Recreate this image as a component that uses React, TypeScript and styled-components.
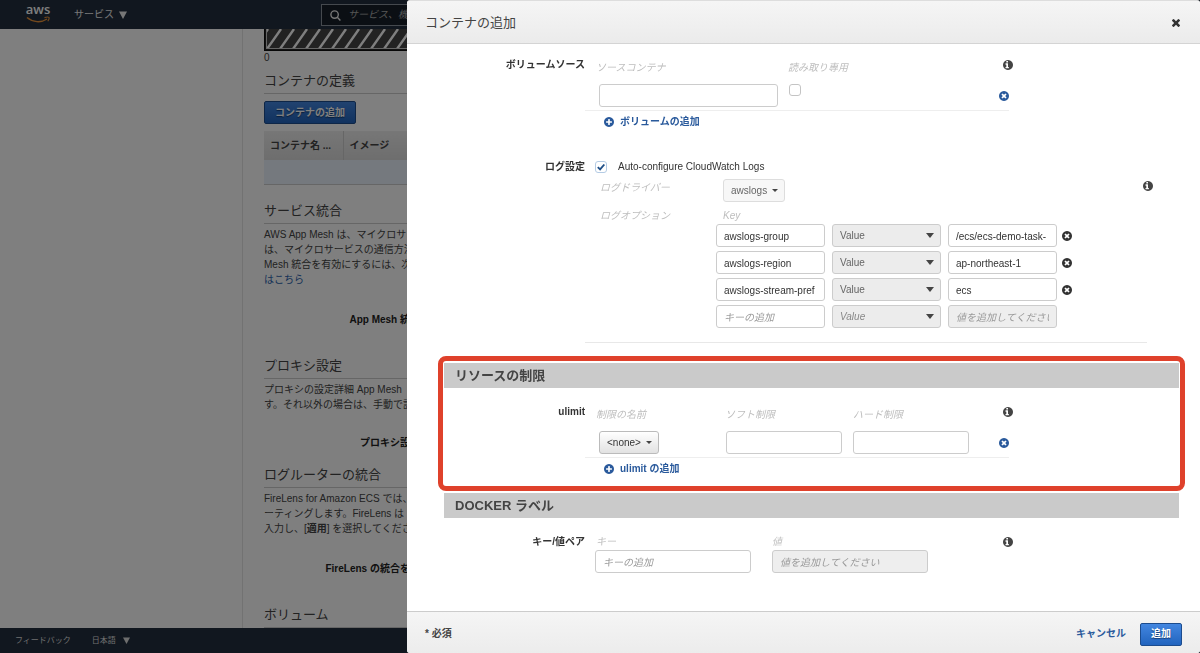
import React, { useState } from "react";
import styled, { createGlobalStyle, css } from "styled-components";

const GlobalStyle = createGlobalStyle`
  *, *::before, *::after { box-sizing: border-box; }
  body {
    margin: 0;
    color: #444;
    font-family: "Liberation Sans", "Noto Sans CJK JP", sans-serif;
    font-size: 10px;
    line-height: 14px;
  }
  button, input, select { font: inherit; color: inherit; margin: 0; }
  h1, h2, p { margin: 0; font-weight: normal; }
`;

/* ---------- Console page behind the dialog ---------- */

const Page = styled.div`
  display: flex;
  flex-direction: column;
  height: 100vh;
  overflow: hidden;
  background: #fff;
`;

const NavBar = styled.header`
  display: flex;
  align-items: center;
  flex: none;
  height: 29px;
  padding-left: 26px;
  background: #232f3e;
  color: #eee;
`;

const Logo = styled.a`
  display: flex;
  flex-direction: column;
  align-items: center;
  gap: 2px;
  width: 24px;
  padding-bottom: 3px;
  color: #fff;
  font-family: "Open Sans", sans-serif;
  font-size: 13px;
  font-weight: 600;
  line-height: 10px;
  text-decoration: none;
`;

const MenuButton = styled.button<{ $small?: boolean }>`
  display: flex;
  align-items: center;
  gap: ${(p) => (p.$small ? "7px" : "5px")};
  padding: 0;
  border: 0;
  background: none;
  font-size: ${(p) => (p.$small ? "8px" : "10px")};
`;

const ServicesButton = styled(MenuButton)`
  width: 247px;
  margin-left: 24px;
`;

const SearchBox = styled.label`
  display: flex;
  align-items: center;
  gap: 7px;
  flex: 1;
  height: 22px;
  margin-right: 21px;
  padding-left: 8px;
  border: 1px solid #8a929c;
  background: #161e28;
  input {
    flex: 1;
    padding: 0;
    border: 0;
    background: none;
    font-style: italic;
  }
  input::placeholder { color: #aaa; }
`;

const Main = styled.main`
  display: flex;
  flex: 1;
  min-height: 0;
`;

const Sidebar = styled.aside`
  flex: none;
  width: 243px;
  border-right: 1px solid #e4e4e4;
`;

const Content = styled.div`
  flex: 1;
  min-width: 0;
  overflow: hidden;
  padding-left: 21px;
  white-space: nowrap;
`;

const Gauge = styled.svg`
  display: block;
  width: 100%;
  height: 22px;
  border: solid #111;
  border-width: 0 0 1px 1px;
`;

const Heading = styled.h2<{ $top: number }>`
  margin-top: ${(p) => p.$top}px;
  padding-bottom: 2px;
  border-bottom: 1px solid #ccc;
  font-size: 13px;
  line-height: 20px;
`;

const Paragraph = styled.p`
  margin-top: 3px;
  line-height: 15px;
`;

const SettingLabel = styled.p<{ $top: number }>`
  width: 196px;
  margin-top: ${(p) => p.$top}px;
  color: #222;
  font-weight: bold;
  text-align: right;
`;

const Link = styled.a`
  color: #2a62ad;
  text-decoration: none;
`;

const PrimaryButton = styled.button`
  height: 23px;
  padding: 0 10px;
  border: 1px solid #1c4c8e;
  border-radius: 2px;
  background: linear-gradient(#4286e0, #2264be);
  color: #fff;
  font-weight: bold;
  text-shadow: 0 1px 1px #113b73;
`;

const AddContainerButton = styled(PrimaryButton)`
  display: block;
  margin: 7px 0;
`;

const ContainerTable = styled.table`
  width: 100%;
  border-collapse: collapse;
  table-layout: fixed;
  th {
    height: 29px;
    padding: 0 6px;
    border-right: 1px solid #ccc;
    background: linear-gradient(#eee, #dcdcdc);
    text-align: left;
  }
  th:first-child { width: 79px; }
  td {
    height: 24px;
    padding: 0;
    border-bottom: 1px solid #ccc;
    background: #eaf3fc;
  }
`;

const PageFooter = styled.footer`
  display: flex;
  align-items: center;
  gap: 21px;
  flex: none;
  height: 25px;
  padding-left: 15px;
  background: #232f3e;
  color: #ddd;
  font-size: 8px;
`;

const FooterLink = styled.a`
  color: inherit;
  text-decoration: none;
`;

const Backdrop = styled.div`
  position: fixed;
  inset: 0;
  background: rgba(0, 0, 0, 0.5);
`;

/* ---------- Dialog ---------- */

const Dialog = styled.section`
  position: fixed;
  inset: 0 0 0 407px;
  display: flex;
  flex-direction: column;
  overflow: hidden;
  border-top: 1px solid #ddd;
  border-radius: 3px;
  background: #fff;
`;

const DialogHeader = styled.header`
  display: flex;
  align-items: center;
  justify-content: space-between;
  flex: none;
  height: 43px;
  padding: 1px 20px 0 18px;
  border-bottom: 1px solid #d4d4d4;
  background: linear-gradient(#f5f5f5, #ebebeb);
`;

const DialogTitle = styled.h1`
  font-size: 13px;
  line-height: 20px;
`;

const IconButton = styled.button<{ $blue?: boolean }>`
  display: flex;
  padding: 0;
  border: 0;
  background: none;
  color: ${(p) => (p.$blue ? "#2a5a9c" : "#333")};
`;

const DialogBody = styled.div`
  flex: 1;
  min-height: 0;
  overflow: auto;
  padding: 14px 21px 14px 37px;
`;

const DialogFooter = styled.footer`
  display: flex;
  align-items: center;
  gap: 14px;
  flex: none;
  height: 42px;
  padding: 3px 18px 0;
  border-top: 1px solid #ccc;
  background: linear-gradient(#f5f5f5, #ececec);
  font-weight: bold;
`;

const Required = styled.span`
  flex: 1;
`;

const CancelButton = styled.button`
  padding: 0;
  border: 0;
  background: none;
  color: #2a5a9c;
  font-weight: bold;
`;

const FormRow = styled.div<{ $top?: number }>`
  display: grid;
  grid-template-columns: 141px minmax(0, 1fr);
  margin-top: ${(p) => p.$top ?? 0}px;
`;

const RowLabel = styled.span`
  color: #333;
  font-weight: bold;
  text-align: right;
`;

const Fields = styled.div<{ $wide?: boolean }>`
  max-width: ${(p) => (p.$wide ? "568px" : "428px")};
`;

const headColumns = {
  volume: "192px 1fr 10px",
  ulimit: "129px 128px 1fr 10px",
  pair: "176px 1fr 10px",
};

const itemColumns = {
  volume: "190px 1fr 10px",
  ulimit: "127px 127px 1fr 10px",
  pair: "177px 1fr 10px",
};

type Columns = keyof typeof headColumns;

const HeadLine = styled.div<{ $cols: Columns }>`
  display: grid;
  grid-template-columns: ${(p) => headColumns[p.$cols]};
  height: ${(p) => (p.$cols === "pair" ? 15 : 26)}px;
  padding-top: ${(p) => (p.$cols === "pair" ? 0 : 3)}px;
  padding-left: 11px;
  svg { margin-top: ${(p) => (p.$cols === "pair" ? 2 : -1)}px; }
`;

const Hint = styled.label`
  color: #bebebe;
  font-style: italic;
`;

const ItemLine = styled.div<{ $cols: Columns }>`
  display: grid;
  grid-template-columns: ${(p) => itemColumns[p.$cols]};
  margin-right: 4px;
  padding: ${(p) => (p.$cols === "pair" ? "0 0 0 10px" : "0 0 3px 14px")};
  border-bottom: ${(p) => (p.$cols === "pair" ? "0" : "1px solid #eee")};
  ${IconButton} { align-self: center; }
`;

const inputBox = css`
  height: 23px;
  border: 1px solid #ccc;
  border-radius: 3px;
`;

const TextInput = styled.input<{ $width: number }>`
  ${inputBox}
  width: ${(p) => p.$width}px;
  padding: 1px 7px 0;
  background: #fff;
  color: #333;
  &::placeholder { color: #999; font-style: italic; opacity: 1; }
  &:disabled { background: #eee; }
`;

const SelectWrap = styled.span<{ $kind: "button" | "field" }>`
  position: relative;
  display: block;
  width: ${(p) => (p.$kind === "field" ? "109px" : "max-content")};
  &::after {
    content: "";
    position: absolute;
    top: ${(p) => (p.$kind === "field" ? "9px" : "10px")};
    right: 7px;
    border: solid transparent;
    border-width: ${(p) => (p.$kind === "field" ? "5px 4px 0" : "3px 3px 0")};
    border-top-color: #444;
    pointer-events: none;
  }
`;

const Select = styled.select<{ $width: number; $look: "gray" | "raised" | "pale"; $empty?: boolean }>`
  ${inputBox}
  appearance: none;
  display: block;
  width: ${(p) => p.$width}px;
  padding: 0 7px;
  font-style: ${(p) => (p.$empty ? "italic" : "normal")};
  color: ${(p) => (p.$empty ? "#888" : p.$look === "raised" ? "#333" : "#666")};
  background: ${(p) =>
    p.$look === "gray" ? "#ececec" : p.$look === "pale" ? "#f7f7f7" : "linear-gradient(#fff, #e2e2e2)"};
  border-color: ${(p) => (p.$look === "pale" ? "#ddd" : p.$look === "raised" ? "#bbb" : "#ccc")};
`;

const CheckBox = styled.span`
  position: relative;
  display: block;
  width: 12px;
  height: 12px;
  input {
    appearance: none;
    display: block;
    width: 12px;
    height: 12px;
    border: 1px solid #c4c4c4;
    border-radius: 3px;
    background: #fff;
  }
  svg {
    position: absolute;
    inset: 0;
    display: none;
    pointer-events: none;
  }
  input:checked { border-color: #b4cbe4; }
  input:checked + svg { display: block; }
`;

const AddLink = styled.button`
  display: flex;
  align-items: center;
  gap: 6px;
  margin: 4px 0 0 19px;
  padding: 0;
  border: 0;
  background: none;
  color: #2a5a9c;
  font-weight: bold;
`;

const CheckLine = styled.label`
  display: flex;
  align-items: center;
  gap: 11px;
  height: 14px;
  padding-left: 10px;
  color: #333;
`;

const DriverLine = styled.div`
  display: grid;
  grid-template-columns: 123px 1fr 10px;
  height: 35px;
  margin-top: 5px;
  padding-left: 15px;
  ${Hint} { margin-top: 2px; }
  & > svg { margin-top: 2px; }
`;

const OptionHead = styled.div`
  display: grid;
  grid-template-columns: 123px 1fr;
  height: 15px;
  margin-top: -5px;
  padding-left: 15px;
`;

const OptionList = styled.div`
  display: flex;
  flex-direction: column;
  gap: 4px;
  padding-left: 131px;
`;

const OptionLine = styled.div`
  display: flex;
  align-items: center;
  gap: 7px;
  ${IconButton} { margin-left: -2px; }
`;

const Divider = styled.hr`
  margin: 14px 6px 0 0;
  border: 0;
  border-top: 1px solid #e8e8e8;
`;

const Section = styled.section<{ $top: number; $highlight?: boolean }>`
  position: relative;
  margin-top: ${(p) => p.$top}px;
  padding-bottom: 10px;
  ${(p) =>
    p.$highlight &&
    css`
      &::after {
        content: "";
        position: absolute;
        inset: -7px -6px -5px;
        border: 5px solid #df412b;
        border-radius: 8px;
        pointer-events: none;
      }
    `}
`;

const SectionTitle = styled.h2`
  height: 25px;
  padding-left: 11px;
  background: #cacaca;
  font-size: 13px;
  font-weight: bold;
  line-height: 25px;
`;

/* ---------- Icons ---------- */

const circle =
  "M1664 896q0 209-103 385.5t-279.5 279.5-385.5 103-385.5-103-279.5-279.5-103-385.5 103-385.5 279.5-279.5 385.5-103 385.5 103 279.5 279.5 103 385.5z";

const marks = {
  info: "M1024 1376v-160q0-14-9-23t-23-9h-96v-512q0-14-9-23t-23-9h-320q-14 0-23 9t-9 23v160q0 14 9 23t23 9h96v320h-96q-14 0-23 9t-9 23v160q0 14 9 23t23 9h448q14 0 23-9t9-23zM896 480v-160q0-14-9-23t-23-9h-192q-14 0-23 9t-9 23v160q0 14 9 23t23 9h192q14 0 23-9t9-23z",
  remove:
    "M1277 1122q0-26-19-45l-181-181 181-181q19-19 19-45 0-27-19-46l-90-90q-19-19-46-19-26 0-45 19l-181 181-181-181q-19-19-45-19-27 0-46 19l-90 90q-19 19-19 46 0 26 19 45l181 181-181 181q-19 19-19 45 0 27 19 46l90 90q19 19 46 19 26 0 45-19l181-181 181 181q19 19 45 19 27 0 46-19l90-90q19-19 19-46z",
  add: "M1344 960v-128q0-26-19-45t-45-19h-256v-256q0-26-19-45t-45-19h-128q-26 0-45 19t-19 45v256h-256q-26 0-45 19t-19 45v128q0 26 19 45t45 19h256v256q0 26 19 45t45 19h128q26 0 45-19t19-45v-256h256q26 0 45-19t19-45z",
};

const RoundIcon = ({ mark }: { mark: keyof typeof marks }) => (
  <svg width="10" height="10" viewBox="128 128 1536 1536" fill="currentColor" fillRule="evenodd" aria-hidden="true">
    <path d={circle + marks[mark]} />
  </svg>
);

const CloseIcon = () => (
  <svg width="8" height="8" viewBox="302 302 1188 1188" fill="currentColor" aria-hidden="true">
    <path d="M1490 1258q0 40-28 68l-136 136q-28 28-68 28t-68-28l-294-294-294 294q-28 28-68 28t-68-28l-136-136q-28-28-28-68t28-68l294-294-294-294q-28-28-28-68t28-68l136-136q28-28 68-28t68 28l294 294 294-294q28-28 68-28t68 28l136 136q28 28 28 68t-28 68l-294 294 294 294q28 28 28 68z" />
  </svg>
);

const Smile = () => (
  <svg width="24" height="7" viewBox="0 0 24 7" fill="none" stroke="#e8923a" aria-hidden="true">
    <path d="M1 1.5C7 6.5 15 7 21 3" strokeWidth="1.5" />
    <path d="M18.5 1.6C20.5 1 22.2 .9 22.9 1.4 23.3 2 22.8 3.8 21.8 5.2" strokeWidth="1.1" />
  </svg>
);

const Triangle = ({ size }: { size: number }) => (
  <svg width={size} height={size} viewBox="0 0 8 8" fill="currentColor" aria-hidden="true">
    <path d="M0 .5H8L4 8Z" />
  </svg>
);

const SearchIcon = () => (
  <svg width="11" height="12" viewBox="0 0 11 12" fill="none" stroke="#eee" strokeWidth="1.4" aria-hidden="true">
    <circle cx="4.6" cy="5.6" r="3.7" />
    <path d="M7.3 8.3 10.4 11.4" />
  </svg>
);

function Tick(props: { id?: string; defaultChecked?: boolean }) {
  return (
    <CheckBox>
      <input type="checkbox" {...props} />
      <svg width="12" height="12" viewBox="0 0 12 12" fill="none" stroke="#1f4f87" strokeWidth="1.9" aria-hidden="true">
        <path d="M2.8 6.1 5.1 8.4 9.3 3.5" />
      </svg>
    </CheckBox>
  );
}

const logOptions = [
  { key: "awslogs-group", value: "/ecs/ecs-demo-task-" },
  { key: "awslogs-region", value: "ap-northeast-1" },
  { key: "awslogs-stream-pref", value: "ecs" },
];

function Console() {
  return (
    <Page>
      <NavBar>
        <Logo href="#" aria-label="aws">
          aws
          <Smile />
        </Logo>
        <ServicesButton>
          サービス <Triangle size={8} />
        </ServicesButton>
        <SearchBox>
          <SearchIcon />
          <input type="search" aria-label="検索" placeholder="サービス、機能" />
        </SearchBox>
      </NavBar>
      <Main>
        <Sidebar />
        <Content>
          <Gauge aria-hidden="true">
            <defs>
              <pattern id="hatch" width="13" height="20" patternUnits="userSpaceOnUse">
                <rect width="13" height="20" fill="#444" />
                <path d="M-11 20 3 0M2 20 16 0M15 20 29 0" stroke="#fff" strokeWidth="2.4" />
              </pattern>
            </defs>
            <rect width="100%" height="20" fill="url(#hatch)" />
            <rect width="1" height="21" fill="#222" />
            <rect x="1" width="1" height="20" fill="#ccc" />
            <rect x="1" y="19" width="100%" height="1" fill="#ccc" />
            <rect y="20" width="100%" height="1" fill="#222" />
          </Gauge>
          <div>0</div>
          <Heading $top={6}>コンテナの定義</Heading>
          <AddContainerButton>コンテナの追加</AddContainerButton>
          <ContainerTable>
            <thead>
              <tr>
                <th>コンテナ名 ...</th>
                <th>イメージ</th>
              </tr>
            </thead>
            <tbody>
              <tr>
                <td colSpan={2} />
              </tr>
            </tbody>
          </ContainerTable>
          <Heading $top={16}>サービス統合</Heading>
          <Paragraph>
            AWS App Mesh は、マイクロサ
            <br />
            は、マイクロサービスの通信方法
            <br />
            Mesh 統合を有効にするには、次
            <br />
            <Link href="#">はこちら</Link>
          </Paragraph>
          <SettingLabel $top={26}>App Mesh 統合の有効化</SettingLabel>
          <Heading $top={29}>プロキシ設定</Heading>
          <Paragraph>
            プロキシの設定詳細 App Mesh
            <br />
            す。それ以外の場合は、手動で設
          </Paragraph>
          <SettingLabel $top={24}>プロキシ設定の有効化</SettingLabel>
          <Heading $top={15}>ログルーターの統合</Heading>
          <Paragraph>
            FireLens for Amazon ECS では、
            <br />
            ーティングします。FireLens は
            <br />
            入力し、[<b>適用</b>] を選択してくださ
          </Paragraph>
          <SettingLabel $top={26}>FireLens の統合を有効にする</SettingLabel>
          <Heading $top={29}>ボリューム</Heading>
        </Content>
      </Main>
      <PageFooter>
        <FooterLink href="#">フィードバック</FooterLink>
        <MenuButton $small>
          日本語 <Triangle size={7} />
        </MenuButton>
      </PageFooter>
    </Page>
  );
}

export default function App() {
  const [driver, setDriver] = useState("awslogs");
  return (
    <>
      <GlobalStyle />
      <Console />
      <Backdrop />
      <Dialog role="dialog" aria-modal="true" aria-labelledby="dialog-title">
        <DialogHeader>
          <DialogTitle id="dialog-title">コンテナの追加</DialogTitle>
          <IconButton aria-label="閉じる">
            <CloseIcon />
          </IconButton>
        </DialogHeader>

        <DialogBody>
          <FormRow>
            <RowLabel>ボリュームソース</RowLabel>
            <Fields>
              <HeadLine $cols="volume">
                <Hint htmlFor="source">ソースコンテナ</Hint>
                <Hint htmlFor="readonly">読み取り専用</Hint>
                <RoundIcon mark="info" />
              </HeadLine>
              <ItemLine $cols="volume">
                <TextInput id="source" $width={179} />
                <Tick id="readonly" />
                <IconButton $blue aria-label="ボリュームの削除">
                  <RoundIcon mark="remove" />
                </IconButton>
              </ItemLine>
              <AddLink>
                <RoundIcon mark="add" />
                ボリュームの追加
              </AddLink>
            </Fields>
          </FormRow>

          <FormRow $top={31}>
            <RowLabel>ログ設定</RowLabel>
            <Fields $wide>
              <CheckLine>
                <Tick defaultChecked />
                Auto-configure CloudWatch Logs
              </CheckLine>
              <DriverLine>
                <Hint htmlFor="driver">ログドライバー</Hint>
                <SelectWrap $kind="button">
                  <Select
                    id="driver"
                    $width={62}
                    $look="pale"
                    value={driver}
                    onChange={(e) => setDriver(e.target.value)}
                  >
                    <option>awslogs</option>
                  </Select>
                </SelectWrap>
                <RoundIcon mark="info" />
              </DriverLine>
              <OptionHead>
                <Hint as="span">ログオプション</Hint>
                <Hint as="span">Key</Hint>
              </OptionHead>
              <OptionList>
                {logOptions.map((o) => (
                  <OptionLine key={o.key}>
                    <TextInput $width={109} defaultValue={o.key} aria-label="Key" />
                    <SelectWrap $kind="field">
                      <Select $width={109} $look="gray" aria-label={o.key}>
                        <option>Value</option>
                      </Select>
                    </SelectWrap>
                    <TextInput $width={109} defaultValue={o.value} aria-label="Value" />
                    <IconButton aria-label="削除">
                      <RoundIcon mark="remove" />
                    </IconButton>
                  </OptionLine>
                ))}
                <OptionLine>
                  <TextInput $width={109} placeholder="キーの追加" aria-label="Key" />
                  <SelectWrap $kind="field">
                    <Select $width={109} $look="gray" $empty aria-label="Value">
                      <option>Value</option>
                    </Select>
                  </SelectWrap>
                  <TextInput $width={109} placeholder="値を追加してください" aria-label="Value" disabled />
                </OptionLine>
              </OptionList>
              <Divider />
            </Fields>
          </FormRow>

          <Section $top={20} $highlight>
            <SectionTitle>リソースの制限</SectionTitle>
            <FormRow $top={17}>
              <RowLabel>ulimit</RowLabel>
              <Fields>
                <HeadLine $cols="ulimit">
                  <Hint htmlFor="limit-name">制限の名前</Hint>
                  <Hint htmlFor="soft">ソフト制限</Hint>
                  <Hint htmlFor="hard">ハード制限</Hint>
                  <RoundIcon mark="info" />
                </HeadLine>
                <ItemLine $cols="ulimit">
                  <SelectWrap $kind="button">
                    <Select id="limit-name" $width={60} $look="raised">
                      <option>&lt;none&gt;</option>
                    </Select>
                  </SelectWrap>
                  <TextInput id="soft" $width={116} />
                  <TextInput id="hard" $width={116} />
                  <IconButton $blue aria-label="ulimit の削除">
                    <RoundIcon mark="remove" />
                  </IconButton>
                </ItemLine>
                <AddLink>
                  <RoundIcon mark="add" />
                  ulimit の追加
                </AddLink>
              </Fields>
            </FormRow>
          </Section>

          <Section $top={7}>
            <SectionTitle>DOCKER ラベル</SectionTitle>
            <FormRow $top={17}>
              <RowLabel>キー/値ペア</RowLabel>
              <Fields>
                <HeadLine $cols="pair">
                  <Hint htmlFor="label-key">キー</Hint>
                  <Hint htmlFor="label-value">値</Hint>
                  <RoundIcon mark="info" />
                </HeadLine>
                <ItemLine $cols="pair">
                  <TextInput id="label-key" $width={156} placeholder="キーの追加" />
                  <TextInput id="label-value" $width={156} placeholder="値を追加してください" disabled />
                </ItemLine>
              </Fields>
            </FormRow>
          </Section>
        </DialogBody>

        <DialogFooter>
          <Required>* 必須</Required>
          <CancelButton>キャンセル</CancelButton>
          <PrimaryButton>追加</PrimaryButton>
        </DialogFooter>
      </Dialog>
    </>
  );
}
